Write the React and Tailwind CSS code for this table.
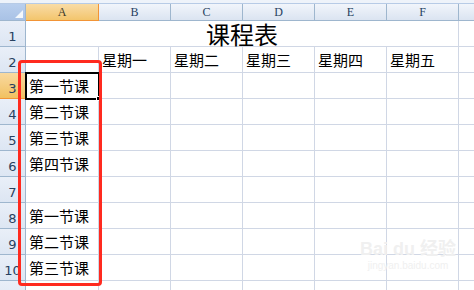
import React from "react";

const cols = ["A", "B", "C", "D", "E", "F"];
const colW = ["w-[73px]", "w-[72px]", "w-[72px]", "w-[72px]", "w-[72px]", "w-[72px]"];
const cjk = { fontFamily: '"Noto Sans CJK SC", "Noto Sans", sans-serif' };

const rowData = {
  2: ["", "星期一", "星期二", "星期三", "星期四", "星期五"],
  3: ["第一节课", "", "", "", "", ""],
  4: ["第二节课", "", "", "", "", ""],
  5: ["第三节课", "", "", "", "", ""],
  6: ["第四节课", "", "", "", "", ""],
  7: ["", "", "", "", "", ""],
  8: ["第一节课", "", "", "", "", ""],
  9: ["第二节课", "", "", "", "", ""],
  10: ["第三节课", "", "", "", "", ""],
  11: ["", "", "", "", "", ""],
};

function RowHead({ n, sel }) {
  return (
    <div
      className={`w-[26px] shrink-0 h-full flex items-end justify-center pb-[1px] border-r border-b text-[13px] leading-[16px] text-[#27415f] ${
        sel
          ? "bg-gradient-to-b from-[#f9d99f] to-[#f1c15f] border-[#f29436]"
          : "bg-gradient-to-b from-[#e9eff8] to-[#dde6f3] border-r-[#9eb6ce] border-b-[#9eb6ce]"
      }`}
      style={{ fontFamily: '"DejaVu Sans", sans-serif' }}
    >
      {n}
    </div>
  );
}

export default function App() {
  return (
    <div className="relative w-[474px] h-[290px] overflow-hidden bg-white" style={cjk}>
      {/* top strip */}
      <div className="h-[4px] bg-[#eef3fa] border-b border-[#b7cbe6]" />
      {/* column header row */}
      <div className="flex h-[17px]">
        <div className="relative w-[26px] shrink-0 border-r border-b border-[#9eb6ce] bg-gradient-to-b from-[#b9cfee] to-[#a9c2e6]">
          <div className="absolute right-[2px] bottom-[2px] w-0 h-0 border-l-[8px] border-l-transparent border-b-[8px] border-b-[#f4f8fc]" />
        </div>
        {cols.map((c, i) => (
          <div
            key={c}
            className={`${colW[i]} shrink-0 flex items-center justify-center border-r border-b text-[12px] leading-[14px] ${
              i === 0
                ? "bg-gradient-to-b from-[#f9dca6] to-[#f3c56c] border-r-[#f29436] border-b-[#f29436] text-[#3b3b2b]"
                : "bg-gradient-to-b from-[#f1f5fb] to-[#dbe4f1] border-r-[#9eb6ce] border-b-[#9eb6ce] text-[#27415f]"
            }`}
            style={{ fontFamily: '"Liberation Serif", serif' }}
          >
            {c}
          </div>
        ))}
        <div className="flex-1 border-b border-[#9eb6ce] bg-gradient-to-b from-[#f1f5fb] to-[#dbe4f1]" />
      </div>

      {/* row 1 with merged title */}
      <div className="flex h-[26px]">
        <RowHead n={1} />
        <div className="w-[433px] shrink-0 border-r border-b border-[#d0d7e5] flex items-end justify-center text-[24px] leading-[24px] text-black">
          课程表
        </div>
        <div className="flex-1 border-b border-[#d0d7e5]" />
      </div>

      {[2, 3, 4, 5, 6, 7, 8, 9, 10, 11].map((r) => (
        <div key={r} className="flex h-[26px]">
          <RowHead n={r === 11 ? "" : r} sel={r === 3} />
          {rowData[r].map((t, i) => (
            <div
              key={i}
              className={`${colW[i]} shrink-0 border-r border-b border-[#d0d7e5] flex items-end pl-[3px] pb-[2px] text-[15px] leading-[20px] text-black`}
            >
              {t}
            </div>
          ))}
          <div className="flex-1 border-b border-[#d0d7e5]" />
        </div>
      ))}

      {/* selected cell A3 */}
      <div className="absolute left-[25px] top-[72px] w-[75px] h-[28px] border-2 border-black pointer-events-none" />
      <div className="absolute left-[96px] top-[96px] w-[5px] h-[5px] bg-black border border-white" />

      {/* red highlight */}
      <div className="absolute left-[18px] top-[60px] w-[84px] h-[226px] border-[3px] border-[#ff2a1f] rounded-[4px]" />

      {/* watermark */}
      <div className="absolute left-[360px] top-[238px] flex flex-col items-center text-[#f0f0f0] leading-none pointer-events-none">
        <div className="text-[18px] font-bold" style={{ fontFamily: '"Liberation Sans", sans-serif' }}>
          Bai du <span style={cjk}>经验</span>
        </div>
        <div className="text-[10px] mt-[3px]" style={{ fontFamily: '"Liberation Sans", sans-serif' }}>
          jingyan.baidu.com
        </div>
      </div>
    </div>
  );
}
